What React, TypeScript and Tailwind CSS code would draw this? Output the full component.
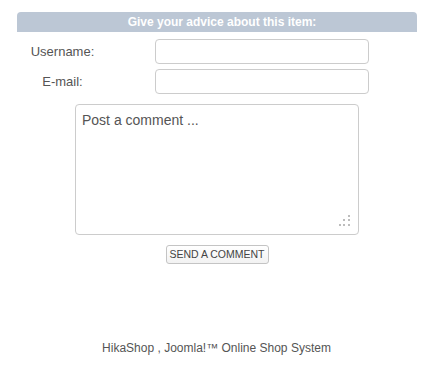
import React from "react";

export default function App() {
  return (
    <div
      className="w-[441px] h-[373px] bg-white text-[#555] flex flex-col"
      style={{ fontFamily: '"Liberation Sans", Arial, sans-serif' }}
    >
      <div className="ml-[17px] mt-[12px] w-[400px] flex flex-col">
        <div className="h-[20px] rounded-t-[4px] bg-[#bcc7d5] flex items-center justify-center text-white font-bold text-[12px] leading-none pl-[10px]">
          Give your advice about this item:
        </div>
        <div className="mt-[7px] flex items-center h-[25px]">
          <div className="w-[91px] text-center text-[13px]">Username:</div>
          <div className="ml-[47px] w-[214px] h-[25px] border border-[#cccccc] rounded-[4px] bg-white" />
        </div>
        <div className="mt-[5px] flex items-center h-[25px]">
          <div className="w-[91px] text-center text-[13px]">E-mail:</div>
          <div className="ml-[47px] w-[214px] h-[25px] border border-[#cccccc] rounded-[4px] bg-white" />
        </div>
        <div className="mt-[10px] ml-[58px] w-[284px] h-[131px] border border-[#cccccc] rounded-[4px] bg-white relative">
          <div className="pl-[6px] pt-[6px] text-[14px] leading-[18px] text-[#555]">Post a comment ...</div>
          <svg className="absolute right-[7px] bottom-[7px]" width="12" height="12" viewBox="0 0 12 12">
            <rect x="9" y="0" width="2" height="2" fill="#bdbdbd" />
            <rect x="4" y="4" width="2" height="2" fill="#bdbdbd" />
            <rect x="9" y="4" width="2" height="2" fill="#bdbdbd" />
            <rect x="0" y="9" width="2" height="2" fill="#bdbdbd" />
            <rect x="4" y="9" width="2" height="2" fill="#bdbdbd" />
            <rect x="9" y="9" width="2" height="2" fill="#bdbdbd" />
          </svg>
        </div>
        <div className="mt-[10px] flex justify-center">
          <div className="w-[103px] h-[19px] border border-[#c4c4c4] rounded-[3px] bg-gradient-to-b from-white to-[#f2f2f2] flex items-center justify-center text-[10.5px] leading-none text-[#444]">
            SEND A COMMENT
          </div>
        </div>
      </div>
      <div className="mt-[77px] text-center text-[12px] leading-[14px] text-[#555] pr-[8px]">
        HikaShop , Joomla!™ Online Shop System
      </div>
    </div>
  );
}
